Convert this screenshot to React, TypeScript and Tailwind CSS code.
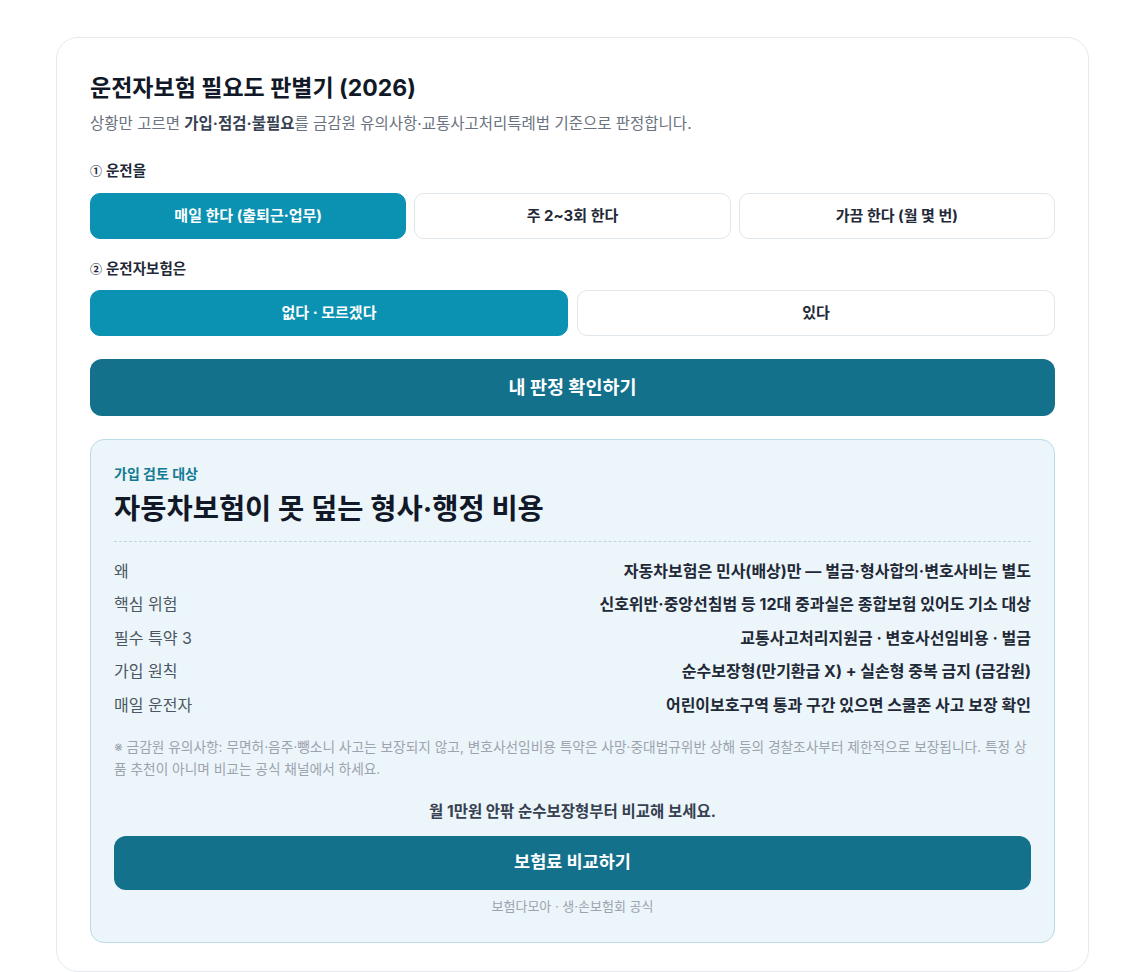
import React, { useState } from 'react';

const FREQ = ['매일 한다 (출퇴근·업무)', '주 2~3회 한다', '가끔 한다 (월 몇 번)'];
const HAS = ['없다 · 모르겠다', '있다'];

const ROWS: [string, string][] = [
  ['왜', '자동차보험은 민사(배상)만 — 벌금·형사합의·변호사비는 별도'],
  ['핵심 위험', '신호위반·중앙선침범 등 12대 중과실은 종합보험 있어도 기소 대상'],
  ['필수 특약 3', '교통사고처리지원금 · 변호사선임비용 · 벌금'],
  ['가입 원칙', '순수보장형(만기환급 X) + 실손형 중복 금지 (금감원)'],
  ['매일 운전자', '어린이보호구역 통과 구간 있으면 스쿨존 사고 보장 확인'],
];

const Choice: React.FC<{ label: string; active: boolean; onClick: () => void }> = ({ label, active, onClick }) => (
  <button
    onClick={onClick}
    className={`h-[46px] rounded-[10px] text-[15px] font-bold ${
      active ? 'bg-[#0b91b1] text-white border border-[#0b91b1]' : 'bg-white text-[#1f2937] border border-[#dfe6ec]'
    }`}
  >
    {label}
  </button>
);

const StepLabel: React.FC<{ num: string; text: string }> = ({ num, text }) => (
  <div className="flex items-center gap-[4px] text-[14.5px] font-bold leading-[20px] text-[#1f2937]">
    <span className="font-['Noto_Sans_CJK_KR',sans-serif] text-[12px]">{num}</span>
    <span>{text}</span>
  </div>
);

export default function App() {
  const [freq, setFreq] = useState(0);
  const [has, setHas] = useState(0);

  return (
    <div className="min-h-screen bg-white pt-[37px] px-[56px] font-['Inter','Noto_Sans_CJK_KR',sans-serif] text-[#1e293b]">
      <div className="w-[1033px] rounded-[22px] border border-[#e6e9ee] px-[33px] pt-[34px] pb-[28px]">
        <h1 className="text-[23px] font-bold leading-[32px] text-[#111827]">운전자보험 필요도 판별기 (2026)</h1>
        <p className="mt-[9px] text-[15.5px] leading-[22px] text-[#6b7280]">
          상황만 고르면 <b className="text-[#374151]">가입·점검·불필요</b>를 금감원 유의사항·교통사고처리특례법 기준으로 판정합니다.
        </p>

        <div className="mt-[26px]">
          <StepLabel num="①" text="운전을" />
        </div>
        <div className="mt-[12px] grid grid-cols-3 gap-[8px]">
          {FREQ.map((f, i) => (
            <Choice key={f} label={f} active={freq === i} onClick={() => setFreq(i)} />
          ))}
        </div>

        <div className="mt-[20px]">
          <StepLabel num="②" text="운전자보험은" />
        </div>
        <div className="mt-[11px] grid grid-cols-2 gap-[9px]">
          {HAS.map((h, i) => (
            <Choice key={h} label={h} active={has === i} onClick={() => setHas(i)} />
          ))}
        </div>

        <button className="mt-[23px] h-[57px] w-full rounded-[12px] bg-[#13718b] text-[18.5px] font-bold text-white">
          내 판정 확인하기
        </button>

        {/* result panel */}
        <div className="mt-[23px] rounded-[14px] border border-[#b9dce6] bg-[#ecf5f9] px-[23px] pt-[25px] pb-[27px]">
          <div className="text-[14px] font-bold leading-[18px] text-[#137a94]">가입 검토 대상</div>
          <div className="mt-[8px] text-[28.5px] font-bold leading-[36px] text-[#111827]">자동차보험이 못 덮는 형사·행정 비용</div>
          <div className="mt-[14px] border-t border-dashed border-[#c3d3dc]" />

          <div className="mt-[12px] flex flex-col">
            {ROWS.map(([k, v]) => (
              <div key={k} className="flex h-[33.5px] items-center justify-between text-[16px]">
                <span className="text-[#4b5563]">{k}</span>
                <span className="font-bold text-[#1f2937]">{v}</span>
              </div>
            ))}
          </div>

          <p className="mt-[14px] break-all text-[13.7px] leading-[22px] text-[#9ca3af]">
            ※ 금감원 유의사항: 무면허·음주·뺑소니 사고는 보장되지 않고, 변호사선임비용 특약은 사망·중대법규위반 상해 등의 경찰조사부터 제한적으로 보장됩니다. 특정 상품 추천이 아니며 비교는 공식 채널에서 하세요.
          </p>

          <div className="mt-[22px] text-center text-[15.5px] font-bold leading-[20px] text-[#374151]">
            월 1만원 안팎 순수보장형부터 비교해 보세요.
          </div>

          <button className="mt-[14px] h-[54px] w-full rounded-[12px] bg-[#13718b] text-[17.5px] font-bold text-white">
            보험료 비교하기
          </button>

          <div className="mt-[7px] text-center text-[13px] leading-[18px] text-[#9ca3af]">보험다모아 · 생·손보험회 공식</div>
        </div>
      </div>
    </div>
  );
}
